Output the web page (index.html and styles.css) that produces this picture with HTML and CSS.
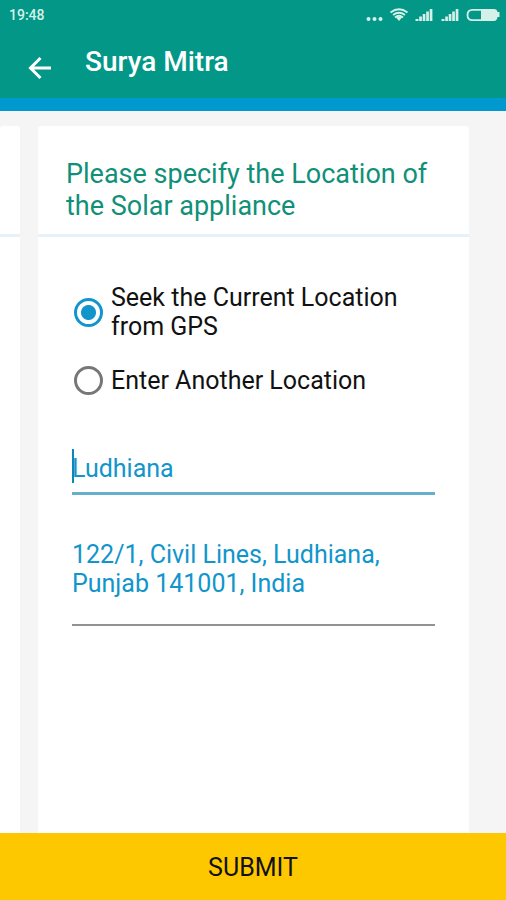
FILE: index.html
```html
<!DOCTYPE html>
<html lang="en">
<head>
<meta charset="utf-8">
<meta name="viewport" content="width=device-width, initial-scale=1">
<title>Surya Mitra</title>
<link rel="stylesheet" href="styles.css">
</head>
<body>
<form class="app">
  <header class="header">
    <div class="status">
      <time class="clock">19:48</time>
      <svg class="status-icons" width="134" height="16" viewBox="0 0 134 16" aria-hidden="true">
        <g fill="#d5f0e9">
          <circle cx="2.500" cy="12" r="2"/><circle cx="8.500" cy="12" r="2"/><circle cx="14.500" cy="12" r="2"/>
          <path d="M30 10.500 33 14 36 10.500Q33 8.500 30 10.500Z"/>
          <path d="M49.500 14h3v-2h-3zM53.200 14h2.700v-4.500h-2.700zM56.700 14h2.700V7h-2.700zM60.200 14h2.700V4.500h-2.700zM63.700 14h2.700V2h-2.700z"/>
          <path d="M75.500 14h3v-2h-3zM79.200 14h2.700v-4.500h-2.700zM82.700 14h2.700V7h-2.700zM86.200 14h2.700V4.500h-2.700zM89.700 14h2.700V2h-2.700z"/>
          <path d="M115 2h13q3 0 3.500 3h2v5h-2q-.5 4-3.500 4h-13z"/>
        </g>
        <g fill="none" stroke="#d5f0e9" stroke-width="1.800">
          <path d="M24.500 5.500Q33-1 41.500 5.500M27 8Q33 3.500 39 8M29 10.500Q33 7 37 10.500"/>
          <path d="M115 2.800h-8.500q-5 0-5 5.200t5 5.200h8.500"/>
        </g>
      </svg>
    </div>
    <div class="toolbar">
      <button class="back" type="button" aria-label="Back">
        <svg width="24" height="24" viewBox="0 0 24 24" fill="none" stroke="#fff" stroke-width="3" aria-hidden="true"><path d="M23 12H3M12.500 2 2.500 12l10 10"/></svg>
      </button>
      <h1 class="title">Surya Mitra</h1>
    </div>
  </header>
  <main class="pager">
    <div class="card previous"><div class="card-head"></div></div>
    <section class="card current">
      <h2 class="card-head">Please specify the Location of the Solar appliance</h2>
      <div class="card-body">
        <label class="option"><input class="radio" type="radio" name="source" checked><span>Seek the Current Location from GPS</span></label>
        <label class="option"><input class="radio" type="radio" name="source"><span>Enter Another Location</span></label>
        <div class="city-field">
          <input class="field city" type="text" value="Ludhiana" aria-label="City">
          <span class="caret"></span>
        </div>
        <textarea class="field address" rows="2" aria-label="Address">122/1, Civil Lines, Ludhiana, Punjab 141001, India</textarea>
      </div>
    </section>
  </main>
  <button class="submit" type="submit">SUBMIT</button>
</form>
</body>
</html>
```
FILE: styles.css
```css
* {
  box-sizing: border-box;
}

body {
  margin: 0;
  font-family: Roboto, "Liberation Sans", sans-serif;
  background: #f5f5f5;
}

button,
input,
textarea {
  font-family: inherit;
}

.app {
  display: flex;
  flex-direction: column;
  min-height: 100vh;
}

.header {
  background: #039787;
  border-bottom: 13px solid #0099cf;
}

.status {
  display: flex;
  justify-content: space-between;
  align-items: center;
  height: 30px;
  padding: 0 6px 0 9px;
}

.clock {
  color: #d5f0e9;
  font-size: 14px;
  font-weight: 500;
}

.toolbar {
  display: flex;
  gap: 33px;
  height: 68px;
  padding: 14px 28px 0;
}

.back {
  display: flex;
  align-items: center;
  height: 48px;
  padding: 0;
  border: 0;
  background: none;
}

.title {
  margin: 0;
  color: #fff;
  font-size: 28px;
  line-height: 36px;
  font-weight: 500;
}

.pager {
  display: flex;
  flex: 1;
  gap: 18px;
  padding: 15px 37px 0 0;
}

.card {
  background: #fff;
  border-radius: 3px 3px 0 0;
}

.previous {
  flex: 0 0 20px;
}

.current {
  flex: 1;
  min-width: 0;
}

.card-head {
  min-height: 111px;
  margin: 0;
  padding: 32px 28px 12px;
  border-bottom: 3px solid #e6f1fa;
  color: #109078;
  font-size: 27px;
  line-height: 32px;
  font-weight: 400;
}

.previous .card-head {
  padding: 0;
}

.card-body {
  padding: 46px 34px 0;
}

.option {
  display: flex;
  align-items: center;
  gap: 8px;
  margin-bottom: 25px;
  padding-left: 2px;
  color: #111;
  font-size: 25px;
  line-height: 29px;
}

.radio {
  appearance: none;
  flex: none;
  width: 29px;
  height: 29px;
  margin: 0;
  border: 3px solid #777;
  border-radius: 50%;
}

.radio:checked {
  border-color: #1295cb;
  background: radial-gradient(circle, #1295cb 7px, #fff 8px);
}

.city-field {
  position: relative;
  margin-top: 48px;
}

.caret {
  position: absolute;
  top: 6px;
  left: 0;
  width: 2px;
  height: 34px;
  background: #0889be;
}

.field {
  display: block;
  width: 100%;
  padding: 0;
  border: 0;
  border-radius: 0;
  outline: 0;
  background: none;
  color: #1295cb;
  font-size: 25px;
  line-height: 29px;
}

.city {
  height: 52px;
  padding: 8px 0 6px;
  border-bottom: 3px solid #65b0c8;
}

.address {
  height: 86px;
  margin-top: 45px;
  resize: none;
  overflow: hidden;
  border-bottom: 2px solid #929292;
}

.submit {
  height: 67px;
  padding: 2px 0 0;
  border: 0;
  background: #fdc800;
  color: #111;
  font-size: 25px;
  font-weight: 400;
}
```
